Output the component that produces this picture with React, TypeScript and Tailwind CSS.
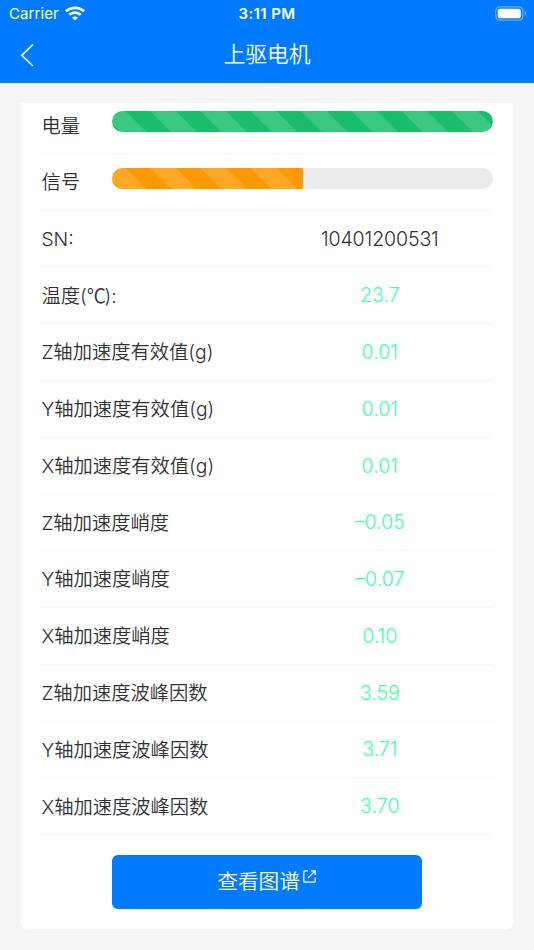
import React from "react";

const readings = [
  { label: "Z轴加速度有效值(g)", value: "0.01" },
  { label: "Y轴加速度有效值(g)", value: "0.01" },
  { label: "X轴加速度有效值(g)", value: "0.01" },
  { label: "Z轴加速度峭度", value: "–0.05" },
  { label: "Y轴加速度峭度", value: "–0.07" },
  { label: "X轴加速度峭度", value: "0.10" },
  { label: "Z轴加速度波峰因数", value: "3.59" },
  { label: "Y轴加速度波峰因数", value: "3.71" },
  { label: "X轴加速度波峰因数", value: "3.70" },
];

const stripes =
  "bg-[linear-gradient(45deg,rgba(255,255,255,0.15)_25%,transparent_25%,transparent_50%,rgba(255,255,255,0.15)_50%,rgba(255,255,255,0.15)_75%,transparent_75%,transparent)] bg-[length:50.3px_50.3px] bg-[position:-11.7px_0px]";

function StatusBar() {
  return (
    <div className="grid h-7 grid-cols-3 items-center pl-[9px] pr-[7px] text-white">
      <div className="flex items-center gap-[6px]">
        <span className="text-[15px] leading-7 tracking-[0.1px]">Carrier</span>
        <svg width="20" height="15" viewBox="0 0 20 15" fill="none" stroke="white" strokeWidth="2.7" className="-mt-[2px]">
          <path d="M1 5.3C6 .6 14 .6 19 5.3" />
          <path d="M4.2 8.8c3.4-3 8.2-3 11.6 0" />
          <path d="M10 14.5l-3-3c1.7-1.5 4.3-1.5 6 0z" fill="white" stroke="none" />
        </svg>
      </div>
      <div className="-ml-[2px] text-center text-[15px] font-semibold leading-7 tracking-[0.4px]">3:11 PM</div>
      <svg className="-mt-[2px] justify-self-end" width="32" height="15" viewBox="0 0 32 15">
        <rect x=".8" y=".8" width="27" height="13.4" rx="4" fill="none" stroke="white" strokeOpacity=".4" strokeWidth="1.2" />
        <rect x="2.8" y="2.8" width="23" height="9.4" rx="2" fill="white" />
        <path d="M29.7 5.2c2 .8 2 3.8 0 4.6z" fill="white" fillOpacity=".45" />
      </svg>
    </div>
  );
}

function Meter({ label, fill }: { label: string; fill: string }) {
  return (
    <div className="flex h-[56.77px] shrink-0 items-center border-b border-[#f5f5f5]">
      <span className="w-[71px] shrink-0 pt-px">{label}</span>
      <div className="mb-[7px] h-[20.7px] grow overflow-hidden rounded-full bg-[#ececec]">
        <div className={`h-full ${stripes} ${fill}`} />
      </div>
    </div>
  );
}

function Reading({ label, value, tone }: { label: React.ReactNode; value: string; tone: string }) {
  return (
    <div className="grid h-[56.77px] shrink-0 grid-cols-2 items-center border-b border-[#f5f5f5]">
      <span className="whitespace-nowrap pt-[0.6px]">{label}</span>
      <span className={`text-center text-[19.6px] ${tone}`}>{value}</span>
    </div>
  );
}

export default function App() {
  const temperature = (
    <>
      温度(<span className="font-['Noto_Sans_CJK_SC',sans-serif] tracking-[-1.5px]">℃</span>
      {"):"}
    </>
  );
  return (
    <div className="flex h-[950px] w-[534px] flex-col overflow-hidden bg-[#f5f5f5] font-['Inter','Noto_Sans_CJK_SC',sans-serif]">
      <header className="h-[82.7px] shrink-0 bg-[#007aff]">
        <StatusBar />
        <div className="grid h-[54px] grid-cols-3 items-center text-white">
          <svg width="14" height="24" viewBox="0 0 14 24" fill="none" stroke="white" strokeWidth="1.6" className="ml-5">
            <path d="M13 1.5L1.8 12.3 13 23" />
          </svg>
          <h1 className="-mt-[2px] text-center text-[21.8px] font-[350] leading-8">上驱电机</h1>
        </div>
      </header>
      <main className="mx-[20.7px] mt-[20.5px] flex h-[826px] shrink-0 flex-col overflow-hidden rounded-b-[6px] bg-white px-[20.7px] text-[19.3px] font-[350] leading-7 text-[#303133]">
        <div className="-mt-[6px] flex flex-col">
          <Meter label="电量" fill="w-full bg-[#19be6b]" />
          <Meter label="信号" fill="w-1/2 bg-[#ff9900]" />
          <Reading label="SN:" value="10401200531" tone="tracking-[-0.15px] text-[#303133]" />
          <Reading label={temperature} value="23.7" tone="text-[#42ffa7]" />
          {readings.map((r) => (
            <Reading key={r.label} label={r.label} value={r.value} tone="text-[#42ffa7]" />
          ))}
        </div>
        <button className="ml-[71px] mt-[20.2px] flex h-[53.5px] w-[309.5px] shrink-0 items-center justify-center rounded-[6px] bg-[#007aff] pb-px pr-px text-[20.7px] font-[350] text-white">
          <span>查看图谱</span>
          <svg width="13" height="13" viewBox="0 0 13 13" fill="none" stroke="white" strokeWidth="1.3" className="mb-[10px] ml-[3px]">
            <path d="M5 .8H2A1.2 1.2 0 0 0 .8 2v9A1.2 1.2 0 0 0 2 12.2h9a1.2 1.2 0 0 0 1.2-1.2V7.5M8 .8h4.2V5M12 1L5 8" />
          </svg>
        </button>
      </main>
    </div>
  );
}
